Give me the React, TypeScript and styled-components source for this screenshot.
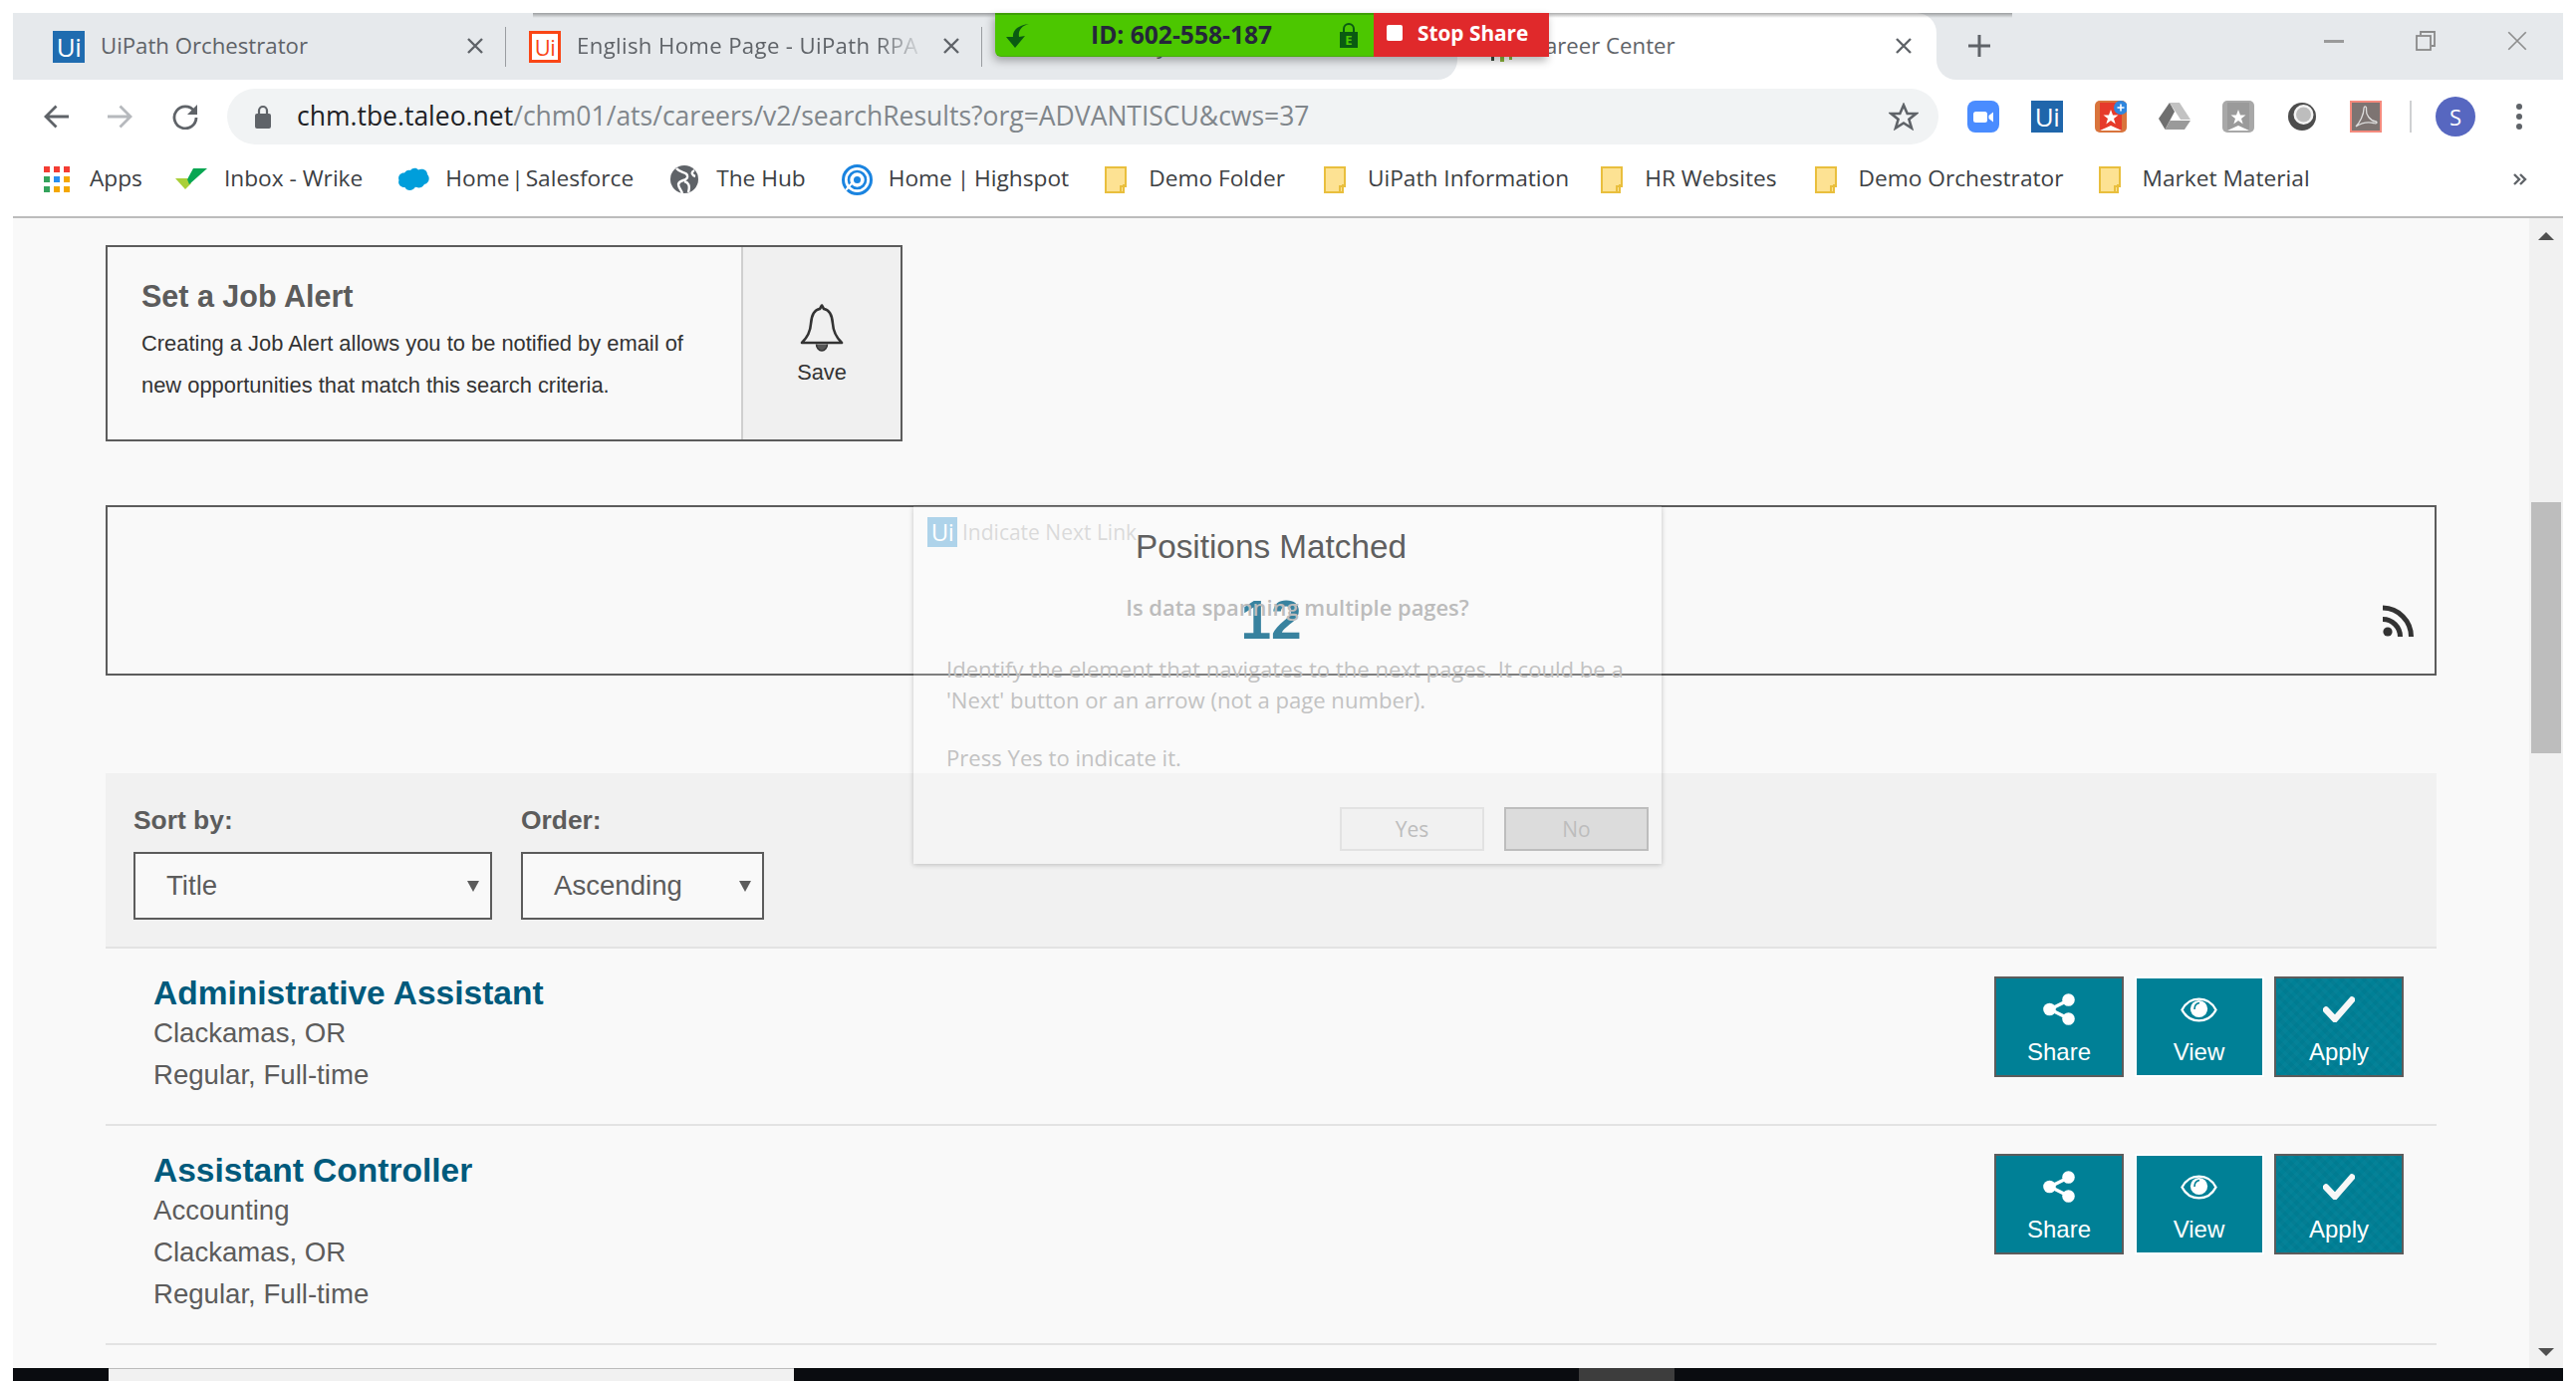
import React from "react";
import styled, { createGlobalStyle } from "styled-components";

const Global = createGlobalStyle`
  html, body { margin: 0; padding: 0; background: #fff; overflow: hidden; }
  * { box-sizing: border-box; }
`;

const chromeFont = `"Open Sans", "Noto Sans", sans-serif`;
const pageFont = `"Liberation Sans", Arial, sans-serif`;

const Frame = styled.div`
  position: relative;
  width: 2586px;
  height: 1386px;
  padding: 13px 13px 0;
  background: #fff;
  display: flex;
  flex-direction: column;
  overflow: hidden;
  font-family: ${pageFont};
`;

/* ---------- tab strip ---------- */
const TabStrip = styled.div`
  display: flex;
  height: 67px;
  flex: none;
`;
const InactiveTabs = styled.div`
  display: flex;
  width: 1450px;
  background: #e6e9ec;
  border-bottom-right-radius: 20px;
`;
const Tab = styled.div<{ $width: number; $pad: number; $sep?: boolean }>`
  width: ${(p) => p.$width}px;
  height: 100%;
  padding-left: ${(p) => p.$pad}px;
  display: flex;
  align-items: center;
  position: relative;
  font-family: ${chromeFont};
  font-size: 22.2px;
  color: #5f6368;
  &::after {
    content: "";
    display: ${(p) => (p.$sep ? "block" : "none")};
    position: absolute;
    right: 0;
    top: 14px;
    height: 40px;
    width: 1px;
    background: #9a9da1;
  }
`;
const TabTitle = styled.span<{ $fade?: boolean }>`
  margin: -2px 0 0 16px;
  white-space: nowrap;
  ${(p) =>
    p.$fade &&
    "letter-spacing: .35px; -webkit-mask-image: linear-gradient(to right, #000 88%, rgba(0,0,0,.15) 100%); mask-image: linear-gradient(to right, #000 88%, rgba(0,0,0,.15) 100%);"}
`;
const TabClose = styled.span<{ $left: number }>`
  display: flex;
  position: absolute;
  left: ${(p) => p.$left}px;
  top: 25px;
`;
const ActiveWrap = styled.div`
  width: 481px;
  background: linear-gradient(to bottom, #e6e9ec 50%, #fff 50%);
`;
const ActiveTab = styled.div`
  height: 100%;
  background: #fff;
  border-radius: 20px 20px 0 0;
  display: flex;
  align-items: center;
  padding-left: 26px;
  position: relative;
  font-family: ${chromeFont};
  font-size: 22.2px;
  color: #5f6368;
`;
const RightStrip = styled.div`
  flex: 1;
  background: #e6e9ec;
  border-bottom-left-radius: 20px;
  display: flex;
  align-items: flex-start;
  padding-left: 31px;
`;
const PlusSlot = styled.span`
  display: flex;
  margin-top: 21px;
`;
const WindowButtons = styled.div`
  display: flex;
  margin-left: auto;
`;
const WinButton = styled.span`
  display: flex;
  width: 92px;
  height: 56px;
  align-items: center;
  justify-content: center;
`;

const UiMark = styled.span<{ $size: number; $bg: string; $fg?: string; $border?: string }>`
  display: inline-flex;
  flex: none;
  width: ${(p) => p.$size}px;
  height: ${(p) => p.$size}px;
  align-items: center;
  justify-content: center;
  background: ${(p) => p.$bg};
  color: ${(p) => p.$fg || "#fff"};
  border: ${(p) => (p.$border ? `3px solid ${p.$border}` : "none")};
  font-family: "Open Sans", sans-serif;
  font-size: ${(p) => Math.round(p.$size * (p.$border ? 0.68 : 0.8))}px;
  line-height: 1;
  font-weight: 500;
  letter-spacing: -0.5px;
`;

/* ---------- share bar ---------- */
const TopShade = styled.div`
  position: absolute;
  left: 535px;
  top: 13px;
  width: 1485px;
  height: 5px;
  background: linear-gradient(to bottom, rgba(0, 0, 0, 0.32), rgba(0, 0, 0, 0));
`;
const ShareBar = styled.div`
  position: absolute;
  left: 999px;
  top: 13px;
  height: 44px;
  width: 556px;
  display: flex;
  box-shadow: -2px 4px 8px rgba(0, 0, 0, 0.3);
  border-bottom-left-radius: 6px;
  font-family: "Open Sans", sans-serif;
  font-weight: 700;
`;
const GreenPart = styled.div`
  width: 380px;
  background: #4cc700;
  border-top: 2px solid #3f9f05;
  border-bottom: 1px solid #46ad05;
  border-bottom-left-radius: 6px;
  display: flex;
  align-items: center;
  padding-left: 11px;
`;
const SessionId = styled.span`
  margin: -2px 0 0 61px;
  font-size: 24.6px;
  color: #24263a;
  white-space: nowrap;
`;
const LockSlot = styled.span`
  display: flex;
  margin-left: auto;
  margin-right: 16px;
`;
const RedPart = styled.div`
  flex: 1;
  background: #e0292b;
  display: flex;
  align-items: center;
  padding: 0 0 4px 13px;
  color: #fff;
  font-size: 20.8px;
  white-space: nowrap;
`;
const StopSquare = styled.span`
  width: 16px;
  height: 16px;
  border-radius: 2px;
  background: #fff;
  margin-right: 15px;
`;

/* ---------- toolbar ---------- */
const Toolbar = styled.div`
  height: 73px;
  flex: none;
  display: flex;
  align-items: center;
  padding-left: 30px;
  background: #fff;
`;
const NavIcon = styled.span<{ $ml?: number }>`
  display: flex;
  margin-left: ${(p) => p.$ml || 0}px;
`;
const Omnibox = styled.div`
  margin-left: 28px;
  width: 1718px;
  height: 56px;
  border-radius: 28px;
  background: #f1f3f4;
  display: flex;
  align-items: center;
  padding-left: 28px;
  font-family: ${chromeFont};
  font-size: 26.5px;
  color: #80868b;
`;
const UrlText = styled.span`
  margin: -2px 0 0 26px;
  white-space: nowrap;
  b {
    font-weight: 400;
    color: #202124;
  }
`;
const StarSlot = styled.span`
  display: flex;
  margin-left: auto;
  margin-right: 20px;
`;
const Extensions = styled.div`
  margin-left: 29px;
  display: flex;
  gap: 32px;
  align-items: center;
`;
const ToolDivider = styled.span`
  width: 2px;
  height: 32px;
  background: #cfd0d2;
  margin-left: 28px;
`;
const Avatar = styled.span`
  width: 40px;
  height: 40px;
  margin-left: 24px;
  border-radius: 50%;
  background: #5767c0;
  color: #fff;
  display: flex;
  align-items: center;
  justify-content: center;
  font-family: "Open Sans", sans-serif;
  font-size: 22px;
`;
const MenuDots = styled.span`
  display: flex;
  flex-direction: column;
  gap: 4px;
  margin-left: 41px;
  i {
    width: 6px;
    height: 6px;
    border-radius: 50%;
    background: #5f6368;
  }
`;

/* ---------- bookmarks ---------- */
const Bookmarks = styled.div`
  height: 66px;
  flex: none;
  display: flex;
  align-items: center;
  padding: 0 36px 10px 31px;
  border-bottom: 2px solid #bcbcbc;
  font-family: ${chromeFont};
  font-size: 22.7px;
  color: #3c4043;
  background: #fff;
`;
const Bookmark = styled.span<{ $gap: number; $ml: number }>`
  display: flex;
  align-items: center;
  gap: ${(p) => p.$gap}px;
  margin-left: ${(p) => p.$ml}px;
  white-space: nowrap;
`;
const BookmarkLabel = styled.span<{ $tight?: number }>`
  margin-top: -3px;
  word-spacing: ${(p) => p.$tight || 0}px;
`;
const MoreSlot = styled.span`
  display: flex;
  margin-left: auto;
`;

/* ---------- page ---------- */
const Viewport = styled.div`
  flex: 1;
  min-height: 0;
  display: flex;
  background: #f9f9f9;
`;
const Page = styled.main`
  flex: 1;
  padding: 27px 93px 0;
  overflow: hidden;
`;
const Scrollbar = styled.div`
  width: 34px;
  flex: none;
  background: #f1f1f1;
  display: flex;
  flex-direction: column;
  align-items: center;
  padding: 14px 0 12px;
`;
const ArrowUp = styled.span`
  width: 0;
  height: 0;
  border-left: 8px solid transparent;
  border-right: 8px solid transparent;
  border-bottom: 8px solid #505050;
`;
const ArrowDown = styled(ArrowUp)`
  border-bottom: 0;
  border-top: 8px solid #505050;
  margin-top: auto;
`;
const Thumb = styled.span`
  margin-top: 263px;
  width: 30px;
  height: 252px;
  background: #bdbdbd;
`;

const AlertCard = styled.section`
  width: 800px;
  height: 197px;
  border: 2px solid #5c5c5c;
  display: flex;
`;
const AlertBody = styled.div`
  flex: 1;
  padding: 29px 0 0 34px;
  color: #333;
  font-size: 21.9px;
  line-height: 42px;
`;
const AlertTitle = styled.h3`
  margin: 0;
  font-size: 30.5px;
  line-height: 40px;
  font-weight: 700;
  color: #5c5c5c;
`;
const AlertText = styled.p`
  margin: 7px 0 0;
`;
const SavePanel = styled.div`
  width: 160px;
  background: #f0f0f0;
  border-left: 2px solid #cfcfcf;
  display: flex;
  flex-direction: column;
  align-items: center;
  padding-top: 57px;
  font-size: 21.8px;
  color: #333;
  span {
    margin-top: 6px;
    line-height: 30px;
  }
`;

const MatchBox = styled.section`
  margin-top: 64px;
  height: 171px;
  border: 2px solid #5c5c5c;
  display: grid;
  grid-template-columns: 1fr;
  padding-top: 20px;
`;
const MatchCenter = styled.div`
  grid-area: 1 / 1;
  text-align: center;
`;
const MatchLabel = styled.div`
  font-size: 33.3px;
  line-height: 40px;
  color: #333;
`;
const MatchCount = styled.div`
  margin-top: 21px;
  font-size: 55px;
  line-height: 64px;
  font-weight: 700;
  color: #005f85;
`;
const RssSlot = styled.span`
  grid-area: 1 / 1;
  justify-self: end;
  align-self: end;
  display: flex;
  margin: 0 21px 37px 0;
  line-height: 0;
`;

const SortBar = styled.section`
  margin-top: 98px;
  height: 176px;
  background: #f1f1f1;
  border-bottom: 2px solid #e3e3e3;
  padding: 30px 28px 0;
  display: flex;
  gap: 29px;
`;
const SortField = styled.div<{ $w: number }>`
  width: ${(p) => p.$w}px;
`;
const SortLabel = styled.div`
  font-size: 26.4px;
  line-height: 34px;
  font-weight: 700;
  color: #5c5c5c;
`;
const SelectBox = styled.div`
  margin-top: 15px;
  height: 68px;
  border: 2px solid #5c5c5c;
  background: #f9f9f9;
  display: flex;
  align-items: center;
  justify-content: space-between;
  padding: 0 11px 0 31px;
  font-size: 27.6px;
  color: #5c5c5c;
`;
const Caret = styled.span`
  width: 0;
  height: 0;
  border-left: 6px solid transparent;
  border-right: 6px solid transparent;
  border-top: 11px solid #5c5c5c;
`;

const JobRow = styled.article`
  display: flex;
  justify-content: space-between;
  border-bottom: 2px solid #e3e3e3;
  padding: 26px 33px 28px 48px;
`;
const JobInfo = styled.div`
  font-size: 27.6px;
  line-height: 42px;
  color: #5c5c5c;
`;
const JobTitle = styled.h2`
  margin: 0;
  font-size: 33.5px;
  line-height: 38px;
  font-weight: 700;
  color: #005a7c;
`;
const JobActions = styled.div`
  display: flex;
  gap: 10.5px;
  margin-top: 2px;
  align-self: flex-start;
`;
const ActionButton = styled.div<{ $variant: "dark" | "light" | "pattern" }>`
  width: 130px;
  height: 101px;
  border: 2px solid ${(p) => (p.$variant === "light" ? "#fff" : "#5c5c5c")};
  background-color: #008096;
  background-image: ${(p) =>
    p.$variant === "pattern"
      ? "repeating-linear-gradient(45deg, rgba(0,0,0,.035) 0 4px, transparent 4px 8px), repeating-linear-gradient(-45deg, rgba(255,255,255,.02) 0 4px, transparent 4px 8px)"
      : "none"};
  color: #fff;
  display: flex;
  flex-direction: column;
  align-items: center;
  padding-top: 15px;
  font-size: 24px;
  span {
    margin-top: 12px;
    line-height: 30px;
  }
`;
const ActionIcon = styled.div`
  height: 32px;
  display: flex;
  align-items: center;
  justify-content: center;
`;

/* ---------- overlay dialog ---------- */
const Dialog = styled.div`
  position: absolute;
  left: 917px;
  top: 508px;
  width: 751px;
  height: 359px;
  background: rgba(255, 255, 255, 0.22);
  box-shadow: 0 1px 5px rgba(0, 0, 0, 0.22);
  display: flex;
  flex-direction: column;
  font-family: ${chromeFont};
  color: #c2c2c2;
  padding: 11px 13px 13px;
`;
const DialogHead = styled.div`
  display: flex;
  align-items: center;
  gap: 5px;
  font-size: 21px;
  color: #dadada;
  height: 30px;
  margin-left: 1px;
`;
const DialogQuestion = styled.div`
  margin-top: 46px;
  padding-left: 20px;
  line-height: 30px;
  font-size: 21.9px;
  font-weight: 600;
  text-align: center;
  color: #bcbcbc;
`;
const DialogText = styled.p`
  margin: 31px 0 0 20px;
  font-size: 22.1px;
  line-height: 31px;
  white-space: pre-line;
  & + & {
    margin-top: 27px;
  }
`;
const DialogButtons = styled.div`
  margin-top: auto;
  display: flex;
  justify-content: flex-end;
  gap: 20px;
`;
const DialogButton = styled.div<{ $primary?: boolean }>`
  width: 145px;
  height: 44px;
  display: flex;
  align-items: center;
  justify-content: center;
  font-size: 21px;
  color: #bdbdbd;
  background: ${(p) => (p.$primary ? "#dcdcdc" : "#f1f1f1")};
  border: 2px solid ${(p) => (p.$primary ? "#bdbdbd" : "#e2e2e2")};
`;

/* ---------- bottom strip ---------- */
const TaskStrip = styled.div`
  height: 13px;
  flex: none;
  background: #0a0c10;
  display: flex;
  padding-left: 96px;
`;
const TaskWhite = styled.span`
  width: 688px;
  background: #f1f1f1;
  border-top: 1px solid #bbb;
`;
const TaskGrey = styled.span`
  margin-left: 788px;
  width: 96px;
  background: #3d3d3d;
`;

/* ---------- icons ---------- */
const CloseX = ({ size = 16, color = "#5f6368", w = 2.4 }: { size?: number; color?: string; w?: number }) => (
  <svg width={size} height={size} viewBox="0 0 16 16">
    <path d="M1 1L15 15M15 1L1 15" stroke={color} strokeWidth={w} fill="none" />
  </svg>
);
const ArrowIcon = ({ dir, color }: { dir: "l" | "r"; color: string }) => (
  <svg width="27" height="26" viewBox="0 0 27 26">
    <path
      d={dir === "l" ? "M26 13H3M13.5 2.5L3 13L13.5 23.5" : "M1 13H24M13.5 2.5L24 13L13.5 23.5"}
      stroke={color}
      strokeWidth="2.8"
      fill="none"
    />
  </svg>
);
const ReloadIcon = () => (
  <svg width="28" height="26" viewBox="0 0 28 26">
    <path d="M23 7.5A11 11 0 1 0 25 14" stroke="#5f6368" strokeWidth="2.8" fill="none" />
    <path d="M26 1V11H16Z" fill="#5f6368" />
  </svg>
);
const PadLock = () => (
  <svg width="16" height="24" viewBox="0 0 16 24">
    <path d="M4 10V6a4 4 0 0 1 8 0v4" stroke="#5f6368" strokeWidth="2.2" fill="none" />
    <rect x="0" y="9" width="16" height="15" rx="2" fill="#5f6368" />
  </svg>
);
const StarOutline = () => (
  <svg width="30" height="28" viewBox="0 0 30 28">
    <path d="M15 2.5L18.7 11H27.5L20.4 16.8L23 25.5L15 20.5L7 25.5L9.6 16.8L2.5 11H11.3Z" stroke="#5f6368" strokeWidth="2.6" fill="none" />
  </svg>
);
const ZoomExt = () => (
  <svg width="32" height="32" viewBox="0 0 32 32">
    <rect width="32" height="32" rx="8" fill="#4a8cff" />
    <rect x="6" y="11" width="14" height="11" rx="2.5" fill="#fff" />
    <path d="M21.5 15L26 11.5V21.5L21.5 18Z" fill="#fff" />
  </svg>
);
const BadgeBook = ({ bg, frame, badge }: { bg: string; frame: string; badge?: boolean }) => (
  <svg width="32" height="32" viewBox="0 0 32 32">
    <rect width="32" height="32" rx="5" fill={frame} />
    <rect x="5" y="2" width="22" height="28" fill={bg} />
    <path d="M5 30L16 25L27 30Z" fill="#fff" />
    <path d="M16 9L18 14.5H23.5L19 18L20.7 23.5L16 20L11.3 23.5L13 18L8.5 14.5H14Z" fill="#fff" />
    {badge && (
      <>
        <circle cx="26" cy="7" r="7" fill="#2f86de" />
        <path d="M26 3.5V10.5M22.5 7H29.5" stroke="#fff" strokeWidth="1.6" />
      </>
    )}
  </svg>
);
const DriveExt = () => (
  <svg width="32" height="32" viewBox="0 0 32 32">
    <path d="M11 2L16 11L6.5 29L0 18Z" fill="#6f6f6f" />
    <path d="M11 2H21L32 19H22Z" fill="#c2c2c2" />
    <path d="M11.5 20H32L26 29H6.5Z" fill="#9a9a9a" />
  </svg>
);
const RingExt = () => (
  <svg width="32" height="32" viewBox="0 0 32 32">
    <circle cx="16" cy="16" r="14" fill="#4d4d4d" />
    <circle cx="17.5" cy="14" r="10" fill="#f4f4f4" />
    <circle cx="17.5" cy="14" r="7.5" fill="#bdbdbd" />
  </svg>
);
const PdfExt = () => (
  <svg width="32" height="32" viewBox="0 0 32 32">
    <rect width="32" height="32" fill="#f48a7d" />
    <rect x="2" y="2" width="28" height="28" fill="#7d7472" />
    <path d="M6 26C10 22 14 14 14 8C14 5 17 5 16.5 9C16 14 20 20 26 21C28 21.5 27 23.5 24 22.5C18 21 12 22 6 26Z" stroke="#ddd" strokeWidth="1.3" fill="none" />
  </svg>
);
const AppsGrid = () => {
  const colors = ["#f43c33", "#f43c33", "#f43c33", "#34a35c", "#2a8ff0", "#f4a700", "#34a35c", "#f4a700", "#f4a700"];
  return (
    <svg width="26" height="26" viewBox="0 0 26 26">
      {colors.map((c, i) => (
        <rect key={i} x={(i % 3) * 10} y={Math.floor(i / 3) * 10} width="6" height="6" fill={c} />
      ))}
    </svg>
  );
};
const WrikeIcon = () => (
  <svg width="32" height="22" viewBox="0 0 32 22">
    <path d="M0 10H12L16 15L10 21Z" fill="#a9cf38" />
    <path d="M18 0H32L14 16L12 11Z" fill="#08a652" />
  </svg>
);
const CloudIcon = () => (
  <svg width="32" height="24" viewBox="0 0 32 24">
    <path d="M13 3C15 0.5 19 0 21 2.5C24 0.5 30 2 30 7C33 10 32 16 27 17C25 21 20 21 18 19.5C16 24 9 24 7.5 20C3 20.5 0 16 1.5 13C0 9 3 5 7 5.5C9 3 11 2.5 13 3Z" fill="#009edb" />
  </svg>
);
const HubIcon = () => (
  <svg width="28" height="28" viewBox="0 0 28 28">
    <circle cx="14" cy="14" r="14" fill="#5f6368" />
    <path d="M6 3C10 8 18 6 17 12C16 16 9 14 8 19C8 22 11 25 12 28M24 5C20 7 22 10 25 11M14 16C18 17 20 20 18 27" stroke="#fff" strokeWidth="2.4" fill="none" />
  </svg>
);
const SpotIcon = () => (
  <svg width="31" height="31" viewBox="0 0 31 31">
    <circle cx="15.5" cy="15.5" r="14" fill="none" stroke="#1a84e0" strokeWidth="3" />
    <circle cx="15.5" cy="15.5" r="8.5" fill="none" stroke="#1a84e0" strokeWidth="2.6" />
    <circle cx="15.5" cy="15.5" r="3.5" fill="#1a84e0" />
    <path d="M4 26L10 19" stroke="#fff" strokeWidth="2" />
  </svg>
);
const FolderIcon = () => (
  <svg width="23" height="27" viewBox="0 0 23 27">
    <path d="M1 1H21V19H19V26H1Z" fill="#fde293" stroke="#e9bf3d" strokeWidth="2" />
    <path d="M16 26V20H22" fill="none" stroke="#e9bf3d" strokeWidth="2" />
  </svg>
);
const BellIcon = () => (
  <svg width="44" height="48" viewBox="0 0 44 48">
    <path d="M22 1.5L24 5C31 6 32.5 13 33 20C33.5 29 37 34 42 39H2C7 34 10.5 29 11 20C11.5 13 13 6 20 5Z" fill="none" stroke="#333" strokeWidth="2.6" strokeLinejoin="round" />
    <path d="M16.5 40.5A5.5 6.5 0 0 0 27.5 40.5" fill="#555" stroke="#333" strokeWidth="1.5" />
  </svg>
);
const RssIcon = () => (
  <svg width="31" height="32" viewBox="0 0 31 32">
    <circle cx="5" cy="27" r="4.6" fill="#333" />
    <path d="M0 14.5A17.5 17.5 0 0 1 17.5 32" stroke="#333" strokeWidth="5" fill="none" />
    <path d="M0 3A29 29 0 0 1 28.5 32" stroke="#333" strokeWidth="5" fill="none" />
  </svg>
);
const ShareGlyph = () => (
  <svg width="32" height="32" viewBox="0 0 32 32">
    <path d="M25 7L7 16L25 25" stroke="#fff" strokeWidth="3.4" fill="none" />
    <circle cx="25.5" cy="6.5" r="6.3" fill="#fff" />
    <circle cx="6.5" cy="16" r="6.3" fill="#fff" />
    <circle cx="25.5" cy="25.5" r="6.3" fill="#fff" />
  </svg>
);
const EyeGlyph = () => (
  <svg width="37" height="25" viewBox="0 0 37 25">
    <path d="M1.5 12.5C9 -2 28 -2 35.5 12.5C28 27 9 27 1.5 12.5Z" fill="none" stroke="#fff" strokeWidth="2.4" />
    <circle cx="18.5" cy="11.5" r="8.6" fill="#fff" />
    <path d="M14 12C14 8 16 6 19 5.5" stroke="#008096" strokeWidth="1.6" fill="none" />
  </svg>
);
const CheckGlyph = () => (
  <svg width="32" height="26" viewBox="0 0 32 26">
    <path d="M3 13.5L12 23L29 3.5" stroke="#f7f7f7" strokeWidth="6.4" fill="none" strokeLinejoin="round" strokeLinecap="round" />
  </svg>
);

const jobs = [
  { title: "Administrative Assistant", lines: ["Clackamas, OR", "Regular, Full-time"] },
  { title: "Assistant Controller", lines: ["Accounting", "Clackamas, OR", "Regular, Full-time"] },
];

const bookmarks: { label: string; icon: React.ReactNode; gap: number; ml: number; tight?: number }[] = [
  { label: "Apps", icon: <AppsGrid />, gap: 20, ml: 0 },
  { label: "Inbox - Wrike", icon: <WrikeIcon />, gap: 17, ml: 33 },
  { label: "Home | Salesforce", icon: <CloudIcon />, gap: 16, ml: 35, tight: -4 },
  { label: "The Hub", icon: <HubIcon />, gap: 18, ml: 37 },
  { label: "Home | Highspot", icon: <SpotIcon />, gap: 16, ml: 36, tight: -1 },
  { label: "Demo Folder", icon: <FolderIcon />, gap: 21, ml: 36 },
  { label: "UiPath Information", icon: <FolderIcon />, gap: 21, ml: 39 },
  { label: "HR Websites", icon: <FolderIcon />, gap: 21, ml: 32 },
  { label: "Demo Orchestrator", icon: <FolderIcon />, gap: 21, ml: 38 },
  { label: "Market Material", icon: <FolderIcon />, gap: 21, ml: 35 },
];

export default function App() {
  return (
    <Frame>
      <Global />
      <TabStrip>
        <InactiveTabs>
          <Tab $width={495} $pad={40} $sep>
            <UiMark $size={32} $bg="#1f6cb0">Ui</UiMark>
            <TabTitle>UiPath Orchestrator</TabTitle>
            <TabClose $left={456}><CloseX /></TabClose>
          </Tab>
          <Tab $width={478} $pad={23} $sep>
            <UiMark $size={32} $bg="#fff" $fg="#fa4616" $border="#fa4616">Ui</UiMark>
            <TabTitle $fade>English Home Page - UiPath RPA</TabTitle>
            <TabClose $left={439}><CloseX /></TabClose>
          </Tab>
          <Tab $width={477} $pad={71}>
            <TabTitle>Summary</TabTitle>
          </Tab>
        </InactiveTabs>
        <ActiveWrap>
          <ActiveTab>
            <svg width="32" height="32" viewBox="0 0 32 32">
              <rect x="8" y="24" width="3" height="6" fill="#3c4a3c" />
              <rect x="17" y="24" width="4" height="7" fill="#8bb43a" />
              <rect x="26" y="24" width="3" height="5" fill="#8bb43a" />
            </svg>
            <TabTitle>Career Center</TabTitle>
            <TabClose $left={440}><CloseX /></TabClose>
          </ActiveTab>
        </ActiveWrap>
        <RightStrip>
          <PlusSlot>
            <svg width="24" height="24" viewBox="0 0 24 24">
              <path d="M12 1V23M1 12H23" stroke="#5f6368" strokeWidth="3" />
            </svg>
          </PlusSlot>
          <WindowButtons>
            <WinButton>
              <svg width="20" height="3" viewBox="0 0 20 3"><rect width="20" height="3" fill="#9a9a9a" /></svg>
            </WinButton>
            <WinButton>
              <svg width="20" height="20" viewBox="0 0 20 20">
                <path d="M5 4V1H19V15H16" stroke="#8a8a8a" strokeWidth="1.8" fill="none" />
                <rect x="1" y="5" width="14" height="14" stroke="#8a8a8a" strokeWidth="1.8" fill="none" />
              </svg>
            </WinButton>
            <WinButton>
              <CloseX size={20} color="#8e8e8e" w={1.4} />
            </WinButton>
          </WindowButtons>
        </RightStrip>
      </TabStrip>

      <Toolbar>
        <NavIcon><ArrowIcon dir="l" color="#5f6368" /></NavIcon>
        <NavIcon $ml={37}><ArrowIcon dir="r" color="#b6b9bd" /></NavIcon>
        <NavIcon $ml={38}><ReloadIcon /></NavIcon>
        <Omnibox>
          <PadLock />
          <UrlText><b>chm.tbe.taleo.net</b>/chm01/ats/careers/v2/searchResults?org=ADVANTISCU&amp;cws=37</UrlText>
          <StarSlot><StarOutline /></StarSlot>
        </Omnibox>
        <Extensions>
          <ZoomExt />
          <UiMark $size={32} $bg="#1f66ab">Ui</UiMark>
          <BadgeBook bg="#e63a2b" frame="#d9743c" badge />
          <DriveExt />
          <BadgeBook bg="#9a9a9a" frame="#a8a8a8" />
          <RingExt />
          <PdfExt />
        </Extensions>
        <ToolDivider />
        <Avatar>S</Avatar>
        <MenuDots><i /><i /><i /></MenuDots>
      </Toolbar>

      <Bookmarks>
        {bookmarks.map((b) => (
          <Bookmark key={b.label} $gap={b.gap} $ml={b.ml}>
            {b.icon}
            <BookmarkLabel $tight={b.tight}>{b.label}</BookmarkLabel>
          </Bookmark>
        ))}
        <MoreSlot>
          <svg width="14" height="12" viewBox="0 0 14 12">
            <path d="M1 1L6 6L1 11M7 1L12 6L7 11" stroke="#5f6368" strokeWidth="2.4" fill="none" />
          </svg>
        </MoreSlot>
      </Bookmarks>

      <Viewport>
        <Page>
          <AlertCard>
            <AlertBody>
              <AlertTitle>Set a Job Alert</AlertTitle>
              <AlertText>
                Creating a Job Alert allows you to be notified by email of<br />
                new opportunities that match this search criteria.
              </AlertText>
            </AlertBody>
            <SavePanel>
              <BellIcon />
              <span>Save</span>
            </SavePanel>
          </AlertCard>

          <MatchBox>
            <MatchCenter>
              <MatchLabel>Positions Matched</MatchLabel>
              <MatchCount>12</MatchCount>
            </MatchCenter>
            <RssSlot><RssIcon /></RssSlot>
          </MatchBox>

          <SortBar>
            <SortField $w={360}>
              <SortLabel>Sort by:</SortLabel>
              <SelectBox>Title<Caret /></SelectBox>
            </SortField>
            <SortField $w={244}>
              <SortLabel>Order:</SortLabel>
              <SelectBox>Ascending<Caret /></SelectBox>
            </SortField>
          </SortBar>

          {jobs.map((job) => (
            <JobRow key={job.title}>
              <JobInfo>
                <JobTitle>{job.title}</JobTitle>
                {job.lines.map((l) => (
                  <div key={l}>{l}</div>
                ))}
              </JobInfo>
              <JobActions>
                <ActionButton $variant="dark">
                  <ActionIcon><ShareGlyph /></ActionIcon>
                  <span>Share</span>
                </ActionButton>
                <ActionButton $variant="light">
                  <ActionIcon><EyeGlyph /></ActionIcon>
                  <span>View</span>
                </ActionButton>
                <ActionButton $variant="pattern">
                  <ActionIcon><CheckGlyph /></ActionIcon>
                  <span>Apply</span>
                </ActionButton>
              </JobActions>
            </JobRow>
          ))}
        </Page>
        <Scrollbar>
          <ArrowUp />
          <Thumb />
          <ArrowDown />
        </Scrollbar>
      </Viewport>

      <TaskStrip>
        <TaskWhite />
        <TaskGrey />
      </TaskStrip>

      <Dialog>
        <DialogHead>
          <UiMark $size={30} $bg="#aed3ea">Ui</UiMark>
          Indicate Next Link
        </DialogHead>
        <DialogQuestion>Is data spanning multiple pages?</DialogQuestion>
        <DialogText>{"Identify the element that navigates to the next pages. It could be a\n'Next' button or an arrow (not a page number)."}</DialogText>
        <DialogText>Press Yes to indicate it.</DialogText>
        <DialogButtons>
          <DialogButton>Yes</DialogButton>
          <DialogButton $primary>No</DialogButton>
        </DialogButtons>
      </Dialog>

      <TopShade />
      <ShareBar>
        <GreenPart>
          <svg width="24" height="26" viewBox="0 0 24 26">
            <path d="M23 1C15 3 12 8 13 14L19 13L9 25L0 14L7 14C6 8 12 2 23 1Z" fill="#0a5a12" />
          </svg>
          <SessionId>ID: 602-558-187</SessionId>
          <LockSlot>
            <svg width="18" height="25" viewBox="0 0 18 25">
              <path d="M4 10V6a5 5 0 0 1 10 0v4" stroke="#0a5a12" strokeWidth="2" fill="none" />
              <rect y="9" width="18" height="16" fill="#0a5a12" />
              <text x="9" y="22" fontSize="13" fontWeight="700" textAnchor="middle" fill="#4cc700" fontFamily="Open Sans">E</text>
            </svg>
          </LockSlot>
        </GreenPart>
        <RedPart>
          <StopSquare />
          Stop Share
        </RedPart>
      </ShareBar>
    </Frame>
  );
}
